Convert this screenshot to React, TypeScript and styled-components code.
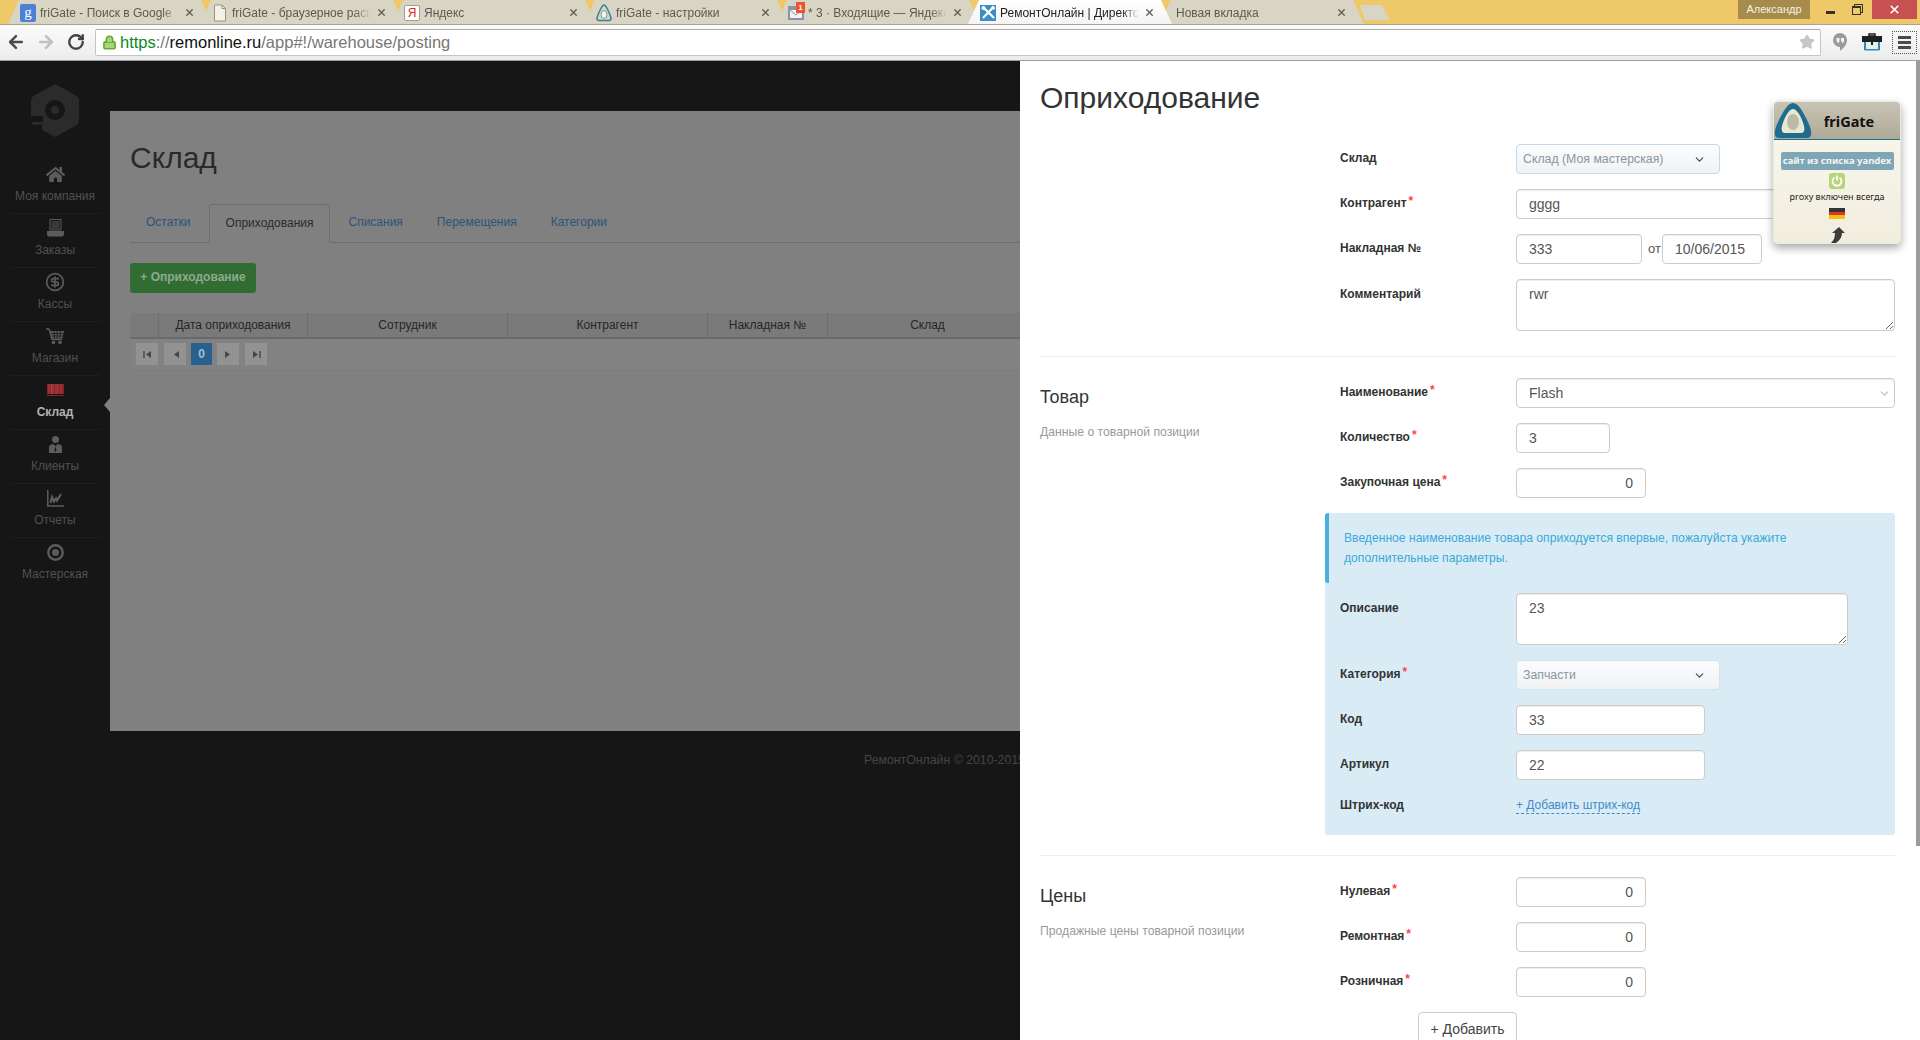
import styled, { createGlobalStyle } from "styled-components";
import { ArrowLeft, ArrowRight, ChevronDown, CircleDollarSign, Lock, RotateCw, Star, X } from "lucide-react";
import { FaHome } from "react-icons/fa";

const GlobalStyle = createGlobalStyle`
  * { box-sizing: border-box; }
  html, body { margin: 0; height: 1040px; overflow: hidden; background: #161616; }
  body { font-family: "Liberation Sans", Arial, sans-serif; font-size: 12px; color: #333; }
`;

const browserTabs = [
  { title: "friGate - Поиск в Google", icon: "google" },
  { title: "friGate - браузерное расширение", icon: "file" },
  { title: "Яндекс", icon: "yandex" },
  { title: "friGate - настройки", icon: "frigate" },
  { title: "* 3 · Входящие — Яндекс.Почта", icon: "mail" },
  { title: "РемонтОнлайн | Директор", icon: "remonline", active: true },
  { title: "Новая вкладка", icon: "" },
];

function TabIcon({ icon }: { icon: string }) {
  switch (icon) {
    case "google":
      return <GoogleIcon>g</GoogleIcon>;
    case "file":
      return (
        <svg width="16" height="18" viewBox="0 0 16 18">
          <path d="M2.5 1h7.5l3.5 3.5v12.5h-11z" fill="#f4f1e6" stroke="#9a937c" />
          <path d="M10 1v3.5h3.5" fill="none" stroke="#9a937c" />
        </svg>
      );
    case "yandex":
      return <YandexIcon>Я</YandexIcon>;
    case "frigate":
      return (
        <svg width="16" height="18" viewBox="0 0 16 18">
          <path d="M8 1c2 0 6 9 7 13 .3 1.5-.5 2.5-2 2.5H3c-1.500 0-2.300-1-2-2.500C2 10 6 1 8 1z" fill="#cfd8cc" stroke="#3f7f8f" strokeWidth="1.500" />
          <ellipse cx="8" cy="10.500" rx="3" ry="4" fill="#f4f2e4" stroke="#7a9a96" />
        </svg>
      );
    case "mail":
      return (
        <MailIcon>
          <svg width="16" height="16" viewBox="0 0 16 16">
            <rect x="0" y="1" width="16" height="14" fill="#8c93a8" />
            <path d="M2 5h12v8H2z" fill="#f2f2ee" />
            <path d="M2 5l6 5 6-5" fill="none" stroke="#8c93a8" />
          </svg>
          <MailBadge>1</MailBadge>
        </MailIcon>
      );
    case "remonline":
      return (
        <svg width="16" height="16" viewBox="0 0 16 16">
          <rect width="16" height="16" fill="#3b8fc4" />
          <path d="M3 2l11 11M13 2.500L3 13" stroke="#fff" strokeWidth="2.200" />
          <circle cx="3.500" cy="3" r="2" fill="#fff" />
          <path d="M12 1.500l2.500 2.500" stroke="#fff" strokeWidth="2.500" />
        </svg>
      );
    default:
      return <EmptyIcon />;
  }
}

const navItems = [
  { label: "Моя компания", icon: <FaHome size={19} /> },
  {
    label: "Заказы",
    icon: (
      <svg width="17" height="18" viewBox="0 0 17 18">
        <path d="M3 .5h11v10.500H3z" fill="none" stroke="currentColor" />
        <path d="M4.500 3h8M4.500 5h8M4.500 7h8M4.500 9h8" stroke="currentColor" />
        <path d="M0 12h17v3c0 1.500-.8 2.500-2 2.500H2c-1.200 0-2-1-2-2.500z" fill="currentColor" />
      </svg>
    ),
  },
  { label: "Кассы", icon: <CircleDollarSign size={20} strokeWidth={2} /> },
  {
    label: "Магазин",
    icon: (
      <svg width="18" height="17" viewBox="0 0 18 17">
        <path d="M0 1h3l3 10.500h10" fill="none" stroke="currentColor" strokeWidth="1.400" />
        <path d="M4 3h14l-1.500 7.500H6z" fill="currentColor" />
        <path d="M8 3l.6 7.500M11.200 3v7.500M14.500 3l-.6 7.500M5 5.500h12.500M5.500 8h11.500" stroke="#161616" strokeWidth=".8" />
        <circle cx="7.500" cy="14.500" r="1.800" fill="currentColor" />
        <circle cx="14" cy="14.500" r="1.800" fill="currentColor" />
      </svg>
    ),
  },
  {
    label: "Склад",
    active: true,
    icon: (
      <svg width="17" height="12" viewBox="0 0 17 12">
        <rect width="17" height="10" fill="#8c2226" />
        <path d="M2 0v10M4.500 0v10M6 0v10M9 0v10M11 0v10M14 0v10" stroke="#b5555a" strokeWidth=".7" />
        <path d="M0 11.500h17" stroke="#8c2226" />
      </svg>
    ),
  },
  {
    label: "Клиенты",
    icon: (
      <svg width="15" height="17" viewBox="0 0 15 17">
        <circle cx="7.500" cy="3.500" r="3.500" fill="currentColor" />
        <path d="M1 17V11c0-1.500 1-2.300 4-3l2.500 2L10 8c3 .7 4 1.500 4 3v6z" fill="currentColor" />
        <path d="M7.500 10.500L6.500 14l1 2 1-2z" fill="#161616" />
      </svg>
    ),
  },
  {
    label: "Отчеты",
    icon: (
      <svg width="17" height="17" viewBox="0 0 17 17">
        <path d="M.8 0v16h16.200" fill="none" stroke="currentColor" strokeWidth="1.500" />
        <path d="M3.500 13l1.500-6 2 4.500 2-3 1 2L14 4" fill="none" stroke="currentColor" strokeWidth="2.200" />
      </svg>
    ),
  },
  {
    label: "Мастерская",
    icon: (
      <svg width="17" height="17" viewBox="0 0 17 17">
        <circle cx="8.500" cy="8.500" r="7.200" fill="none" stroke="currentColor" strokeWidth="2.400" />
        <circle cx="8.500" cy="8.500" r="3.500" fill="currentColor" />
      </svg>
    ),
  },
];

const warehouseTabs = ["Остатки", "Оприходования", "Списания", "Перемещения", "Категории"];
const tableHead = ["", "Дата оприходования", "Сотрудник", "Контрагент", "Накладная №", "Склад", ""];

const PageTriangle = ({ flip, bar }: { flip?: boolean; bar?: boolean }) => (
  <svg width="9" height="9" viewBox="0 0 9 9">
    <g transform={flip ? "translate(9 0) scale(-1 1)" : undefined}>
      {bar && <path d="M1 1v7" stroke="#474747" strokeWidth="1.400" />}
      <path d="M8 1v7L3 4.500z" fill="#474747" />
    </g>
  </svg>
);

export default function App() {
  return (
    <>
      <GlobalStyle />
      <Browser>
        <TabStrip>
          <Tabs>
            {browserTabs.map((tab) => (
              <BrowserTab key={tab.title} $active={tab.active}>
                <TabIcon icon={tab.icon} />
                <TabTitle $active={tab.active}>{tab.title}</TabTitle>
                <TabClose><X size={11} strokeWidth={3} /></TabClose>
              </BrowserTab>
            ))}
            <NewTab />
          </Tabs>
          <ProfileBadge>Александр</ProfileBadge>
          <WindowButton>
            <MinimizeGlyph />
          </WindowButton>
          <WindowButton>
            <RestoreGlyph />
          </WindowButton>
          <CloseButton><X size={13} strokeWidth={3} /></CloseButton>
        </TabStrip>

        <Toolbar>
          <ToolButton><ArrowLeft size={20} strokeWidth={3} color="#4d4d4d" /></ToolButton>
          <ToolButton><ArrowRight size={20} strokeWidth={3} color="#c0c0c0" /></ToolButton>
          <ToolButton><RotateCw size={18} strokeWidth={3.200} color="#444" /></ToolButton>
          <Omnibox>
            <Lock size={15} strokeWidth={2.500} color="#6aa53c" fill="#a6d675" />
            <UrlText>
              <UrlScheme>https</UrlScheme>://<UrlHost>remonline.ru</UrlHost>/app#!/warehouse/posting
            </UrlText>
            <Star size={16} color="#c6c6c6" fill="#c6c6c6" />
          </Omnibox>
          <ExtensionButtons>
            <ExtensionButton>
              <svg width="16" height="20" viewBox="0 0 16 20">
                <path d="M8 1a7 7 0 0 1 7 7c0 4-3 8-7 11v-4a7 7 0 0 1 0-14z" fill="#9a9a9a" />
                <path d="M4.500 6h3v3c0 1.200-.8 2-2 2.200V9.500H4.500zM9 6h3v3c0 1.200-.8 2-2 2.200V9.500H9z" fill="#f2f2f2" />
              </svg>
            </ExtensionButton>
            <ExtensionButton>
              <svg width="20" height="18" viewBox="0 0 20 18">
                <path d="M2 8h16v8c0 1-.6 1.500-1.500 1.500h-13C2.600 17.500 2 17 2 16z" fill="#2f8db5" />
                <path d="M4 9h12v7H4z" fill="#e8eef0" />
                <path d="M0 3h20v6H0z" fill="#1f1f1f" />
                <path d="M7 1h6v2H7z" fill="none" stroke="#1f1f1f" strokeWidth="1.500" />
                <path d="M9 5h2v7H9z" fill="#1f1f1f" />
              </svg>
            </ExtensionButton>
            <MenuButton>
              <MenuBar />
              <MenuBar />
              <MenuBar />
            </MenuButton>
          </ExtensionButtons>
        </Toolbar>

        <Page>
          <Sidebar>
            <Logo>
              <svg width="48" height="53" viewBox="0 0 48 53">
                <path
                  d="M24 0l20 11c2.500 1.400 4 3 4 6v19c0 3-1.500 4.600-4 6L24 53 2 41c-1.300-.8-2-2-2-3.500V17c0-3 1.500-4.600 4-6z"
                  fill="#2b2b2b"
                />
                <circle cx="24" cy="26" r="10" fill="#161616" />
                <circle cx="24" cy="26" r="4" fill="#2b2b2b" />
                <path d="M0 32h12v6H0z" fill="#161616" />
                <path d="M0 42l11-2v7z" fill="#161616" />
              </svg>
            </Logo>
            {navItems.map((item) => (
              <NavItem key={item.label} $active={item.active}>
                <NavIcon>{item.icon}</NavIcon>
                <NavLabel $active={item.active}>{item.label}</NavLabel>
              </NavItem>
            ))}
          </Sidebar>

          <Main>
            <Content>
              <PageTitle>Склад</PageTitle>
              <PageTabs>
                {warehouseTabs.map((tab) => (
                  <PageTab key={tab} $active={tab === "Оприходования"}>{tab}</PageTab>
                ))}
              </PageTabs>
              <GreenButton>+ Оприходование</GreenButton>
              <TableHead>
                {tableHead.map((cell, i) => (
                  <HeadCell key={i}>{cell}</HeadCell>
                ))}
              </TableHead>
              <Pager>
                <PagerButton><PageTriangle bar /></PagerButton>
                <PagerButton><PageTriangle /></PagerButton>
                <PagerCurrent>0</PagerCurrent>
                <PagerButton><PageTriangle flip /></PagerButton>
                <PagerButton><PageTriangle flip bar /></PagerButton>
              </Pager>
            </Content>
            <Copyright>РемонтОнлайн © 2010-2015</Copyright>
          </Main>

          <Drawer>
            <DrawerTitle>Оприходование</DrawerTitle>

            <Section $first>
              <SectionInfo />
              <div>
                <FormRow>
                  <Label>Склад</Label>
                  <SelectBox $tone="blue"><span>Склад (Моя мастерская)</span><ChevronDown size={13} /></SelectBox>
                </FormRow>
                <FormRow>
                  <Label $required>Контрагент</Label>
                  <ComboField><span>gggg</span><ChevronDown size={13} /></ComboField>
                </FormRow>
                <FormRow>
                  <Label>Накладная №</Label>
                  <TextInput $width={126} defaultValue="333" />
                  <DateSeparator>от</DateSeparator>
                  <TextInput $width={100} defaultValue="10/06/2015" />
                </FormRow>
                <FormRow>
                  <Label $top>Комментарий</Label>
                  <TextArea $width={379} defaultValue="rwr" />
                </FormRow>
              </div>
            </Section>

            <Section>
              <SectionInfo>
                <SectionTitle>Товар</SectionTitle>
                <SectionNote>Данные о товарной позиции</SectionNote>
              </SectionInfo>
              <div>
                <FormRow>
                  <Label $required>Наименование</Label>
                  <ComboField><span>Flash</span><ChevronDown size={13} /></ComboField>
                </FormRow>
                <FormRow>
                  <Label $required>Количество</Label>
                  <TextInput $width={94} defaultValue="3" />
                </FormRow>
                <FormRow>
                  <Label $required>Закупочная цена</Label>
                  <TextInput $width={130} $right defaultValue="0" />
                </FormRow>
                <InfoPanel>
                  <InfoAlert>
                    Введенное наименование товара оприходуется впервые, пожалуйста укажите дополнительные параметры.
                  </InfoAlert>
                  <InfoFields>
                    <FormRow>
                      <Label $top>Описание</Label>
                      <TextArea $width={332} defaultValue="23" />
                    </FormRow>
                    <FormRow>
                      <Label $required>Категория</Label>
                      <SelectBox><span>Запчасти</span><ChevronDown size={13} /></SelectBox>
                    </FormRow>
                    <FormRow>
                      <Label>Код</Label>
                      <TextInput $width={189} defaultValue="33" />
                    </FormRow>
                    <FormRow>
                      <Label>Артикул</Label>
                      <TextInput $width={189} defaultValue="22" />
                    </FormRow>
                    <LinkRow>
                      <Label>Штрих-код</Label>
                      <DashedLink>+ Добавить штрих-код</DashedLink>
                    </LinkRow>
                  </InfoFields>
                </InfoPanel>
              </div>
            </Section>

            <Section $last>
              <SectionInfo>
                <SectionTitle>Цены</SectionTitle>
                <SectionNote>Продажные цены товарной позиции</SectionNote>
              </SectionInfo>
              <div>
                <FormRow>
                  <Label $required>Нулевая</Label>
                  <TextInput $width={130} $right defaultValue="0" />
                </FormRow>
                <FormRow>
                  <Label $required>Ремонтная</Label>
                  <TextInput $width={130} $right defaultValue="0" />
                </FormRow>
                <FormRow>
                  <Label $required>Розничная</Label>
                  <TextInput $width={130} $right defaultValue="0" />
                </FormRow>
              </div>
            </Section>
            <DrawerFooter>
              <OutlineButton>+ Добавить</OutlineButton>
            </DrawerFooter>

            <ScrollThumb />

            <FriGatePopup>
              <PopupHeader>
                <svg width="38" height="37" viewBox="0 0 38 37">
                  <path d="M19 1c4 0 8 5 13 15 3 6 6 12 5 17-.4 2-2 3-4 3H5c-2 0-3.600-1-4-3-1-5 2-11 5-17C11 6 15 1 19 1z" fill="#1e6d8e" />
                  <path d="M19 7c3 0 6 4 9 11 2 5 3 8 2 11-.5 1.500-1.500 2-3 2H11c-1.500 0-2.500-.5-3-2-1-3 0-6 2-11 3-7 6-11 9-11z" fill="#e9e7d6" />
                  <ellipse cx="19" cy="20" rx="6" ry="8" fill="#bfbaa8" />
                </svg>
                <PopupName>friGate</PopupName>
              </PopupHeader>
              <PopupBody>
                <ListBadge>сайт из списка yandex</ListBadge>
                <PowerTile>
                  <svg width="12" height="12" viewBox="0 0 12 12">
                    <path d="M3.500 2.500a4.500 4.500 0 1 0 5 0M6 .5v5" fill="none" stroke="#fff" strokeWidth="1.800" />
                  </svg>
                </PowerTile>
                <ProxyNote>proxy включен всегда</ProxyNote>
                <FlagDe />
                <svg width="16" height="16" viewBox="0 0 16 16">
                  <path d="M10 0l6 6h-3c0 4-2 7-6 10H2c3-3 4-6 4-10H3z" fill="#3d3d3d" />
                </svg>
              </PopupBody>
            </FriGatePopup>
          </Drawer>
        </Page>
      </Browser>
    </>
  );
}

const Browser = styled.div`
  width: 1920px;
  height: 1040px;
  display: flex;
  flex-direction: column;
  overflow: hidden;
`;

const TabStrip = styled.div`
  height: 25px;
  flex-shrink: 0;
  display: flex;
  align-items: flex-start;
  background: #efc869;
  border-bottom: 1px solid #a8a395;
`;

const Tabs = styled.div`
  flex: 1;
  display: flex;
  height: 24px;
  padding-left: 8px;
`;

const BrowserTab = styled.div<{ $active?: boolean }>`
  position: relative;
  z-index: ${(p) => (p.$active ? 1 : 0)};
  width: 204px;
  height: 24px;
  margin-right: -12px;
  padding: 1px 16px 0 12px;
  display: flex;
  align-items: center;
  gap: 4px;
  clip-path: polygon(0 100%, 11px 0, 193px 0, 204px 100%);
  background: ${(p) => (p.$active ? "linear-gradient(#fff, #f4f4f4)" : "#d9d5c5")};
`;

const GoogleIcon = styled.span`
  width: 16px;
  height: 18px;
  flex-shrink: 0;
  display: flex;
  align-items: center;
  justify-content: center;
  border-radius: 2px;
  background: #4d80d6;
  color: #fff;
  font: 15px/15px "Liberation Serif", serif;
`;

const YandexIcon = styled.span`
  width: 16px;
  height: 16px;
  flex-shrink: 0;
  display: flex;
  align-items: center;
  justify-content: center;
  border: 1px solid #a39d8a;
  border-radius: 2px;
  background: #fff;
  color: #e02a20;
  font-size: 12px;
`;

const MailIcon = styled.span`
  position: relative;
  width: 16px;
  height: 16px;
  flex-shrink: 0;
`;

const MailBadge = styled.span`
  position: absolute;
  top: -3px;
  right: -1px;
  width: 9px;
  height: 11px;
  background: #f0522d;
  color: #fff;
  font-size: 8px;
  font-weight: bold;
  line-height: 11px;
  text-align: center;
`;

const EmptyIcon = styled.span`
  width: 0;
`;

const TabTitle = styled.span<{ $active?: boolean }>`
  flex: 1;
  min-width: 0;
  overflow: hidden;
  white-space: nowrap;
  font-size: 12px;
  color: ${(p) => (p.$active ? "#222" : "#5c5a50")};
  -webkit-mask-image: linear-gradient(to right, #000 88%, transparent 100%);
  mask-image: linear-gradient(to right, #000 88%, transparent 100%);
`;

const TabClose = styled.span`
  width: 13px;
  flex-shrink: 0;
  display: flex;
  justify-content: center;
  color: #5d5d5d;
`;

const NewTab = styled.div`
  width: 30px;
  height: 15px;
  margin: 5px 0 0 8px;
  background: #d9d5c5;
  clip-path: polygon(0 0, 22px 0, 100% 100%, 5px 100%);
`;

const ProfileBadge = styled.div`
  width: 72px;
  height: 19px;
  margin-right: 7px;
  background: #a68b4d;
  color: #f5f1e4;
  font-size: 11px;
  line-height: 19px;
  text-align: center;
`;

const WindowButton = styled.div`
  width: 26px;
  height: 19px;
  display: flex;
  align-items: center;
  justify-content: center;
`;

const MinimizeGlyph = styled.span`
  width: 9px;
  height: 3px;
  margin-top: 5px;
  background: #33312a;
`;

const RestoreGlyph = styled.span`
  width: 9px;
  height: 9px;
  margin-top: 1px;
  border: 1px solid #33312a;
  border-top-width: 2px;
  box-shadow: 2px -2px 0 -1px #efc869, 2px -2px 0 0 #33312a;
`;

const CloseButton = styled.div`
  width: 45px;
  height: 19px;
  margin: 0 3px 0 3px;
  display: flex;
  align-items: center;
  justify-content: center;
  background: #c75050;
  color: #fff;
`;

const Toolbar = styled.div`
  height: 36px;
  flex-shrink: 0;
  display: flex;
  align-items: center;
  padding: 0 0 1px 1px;
  background: linear-gradient(#fbfbfb, #ececec);
  border-bottom: 1px solid #a0a0a0;
`;

const ToolButton = styled.div`
  width: 30px;
  display: flex;
  justify-content: center;
`;

const Omnibox = styled.div`
  flex: 1;
  height: 27px;
  margin-left: 4px;
  padding: 0 5px 0 6px;
  display: flex;
  align-items: center;
  gap: 3px;
  background: #fff;
  border: 1px solid #c4c4c4;
  border-top-color: #aaa;
  border-radius: 2px;
`;

const UrlText = styled.span`
  flex: 1;
  font-size: 16.500px;
  color: #777;
`;

const UrlScheme = styled.span`
  color: #0b8a23;
`;

const UrlHost = styled.span`
  color: #111;
`;

const ExtensionButtons = styled.div`
  display: flex;
  align-items: center;
  margin-left: 3px;
`;

const ExtensionButton = styled.div`
  width: 32px;
  display: flex;
  justify-content: center;
`;

const MenuButton = styled.div`
  width: 25px;
  height: 23px;
  margin: 0 3px 0 4px;
  display: flex;
  flex-direction: column;
  align-items: center;
  justify-content: center;
  gap: 2px;
  border: 1px dotted #555;
`;

const MenuBar = styled.span`
  width: 13px;
  height: 3px;
  background: #4a4a4a;
`;

const Page = styled.div`
  flex: 1;
  min-height: 0;
  display: flex;
`;

const Sidebar = styled.nav`
  flex: 0 0 110px;
  padding: 23px 10px 0;
  background: #161616;
`;

const Logo = styled.div`
  height: 53px;
  margin-bottom: 23px;
  display: flex;
  justify-content: center;
`;

const NavItem = styled.div<{ $active?: boolean }>`
  position: relative;
  height: 54px;
  padding-top: 4px;
  display: flex;
  flex-direction: column;
  align-items: center;
  border-bottom: 1px solid #1f1f1f;

  &:last-child {
    border-bottom: none;
  }

  ${(p) =>
    p.$active &&
    `
    &::after {
      content: "";
      position: absolute;
      top: 22px;
      right: -10px;
      border-style: solid;
      border-width: 7px 6px 7px 0;
      border-color: transparent #808080 transparent transparent;
    }
  `}
`;

const NavIcon = styled.div`
  height: 20px;
  display: flex;
  align-items: center;
  justify-content: center;
  color: #5c5c5c;
`;

const NavLabel = styled.div<{ $active?: boolean }>`
  margin-top: 4px;
  font-size: 12px;
  line-height: 17px;
  white-space: nowrap;
  font-weight: ${(p) => (p.$active ? "bold" : "normal")};
  color: ${(p) => (p.$active ? "#b4b4b4" : "#515151")};
`;

const Main = styled.main`
  flex: 0 0 910px;
  padding-top: 50px;
  overflow: hidden;
  background: #161616;
`;

const Content = styled.section`
  height: 620px;
  padding: 27px 0 0 20px;
  background: #808080;
`;

const PageTitle = styled.h1`
  margin: 0 0 26px;
  font-size: 30px;
  font-weight: normal;
  line-height: 40px;
  color: #2a2a2a;
`;

const PageTabs = styled.div`
  height: 39px;
  display: flex;
  gap: 2px;
  border-bottom: 1px solid #6d6d6d;
`;

const PageTab = styled.div<{ $active?: boolean }>`
  height: 39px;
  padding: 0 16px;
  font-size: 12px;
  line-height: 36px;
  color: ${(p) => (p.$active ? "#2c2c2c" : "#2f5378")};
  ${(p) =>
    p.$active &&
    `
    border: 1px solid #6d6d6d;
    border-bottom-color: #808080;
    border-radius: 4px 4px 0 0;
  `}
`;

const GreenButton = styled.div`
  width: 126px;
  height: 30px;
  margin: 20px 0;
  background: #316d33;
  border-radius: 3px;
  color: #8eaa8e;
  font-size: 12px;
  font-weight: bold;
  line-height: 29px;
  text-align: center;
`;

const TableHead = styled.div`
  display: grid;
  grid-template-columns: 29px 149px 200px 200px 120px 200px 1fr;
  height: 26px;
  background: #7a7a7a;
  border-bottom: 2px solid #6a6a6a;
`;

const HeadCell = styled.div`
  border-right: 1px solid #6e6e6e;
  color: #262626;
  font-size: 12px;
  line-height: 25px;
  text-align: center;
`;

const Pager = styled.div`
  height: 32px;
  padding: 4px 6px;
  display: flex;
  gap: 6px;
  background: #828282;
  border-bottom: 1px solid #7d7d7d;
`;

const PagerButton = styled.div`
  width: 22px;
  height: 22px;
  display: flex;
  align-items: center;
  justify-content: center;
  background: #929292;
`;

const PagerCurrent = styled.div`
  width: 21px;
  height: 22px;
  margin: 0 -1px;
  background: #29608f;
  color: #a5bccf;
  font-weight: bold;
  line-height: 22px;
  text-align: center;
`;

const Copyright = styled.div`
  margin: 21px 0 0 754px;
  color: #454545;
  font-size: 12.300px;
  line-height: 17px;
  white-space: nowrap;
`;

const Drawer = styled.aside`
  position: relative;
  flex: 0 0 900px;
  padding: 17px 25px 0 20px;
  overflow: hidden;
  background: #fff;
`;

const DrawerTitle = styled.h2`
  margin: 0 0 26px;
  font-size: 30px;
  font-weight: normal;
  line-height: 40px;
  color: #333;
`;

const Section = styled.div<{ $first?: boolean; $last?: boolean }>`
  display: grid;
  grid-template-columns: 285px 1fr;
  padding: ${(p) => (p.$first ? "0 0 10px" : p.$last ? "21px 0 0" : "21px 0 20px")};
  border-bottom: ${(p) => (p.$last ? "none" : "1px solid #eee")};
`;

const SectionInfo = styled.div``;

const SectionTitle = styled.h3`
  margin: 0 0 8px;
  font-size: 18px;
  font-weight: normal;
  line-height: 38px;
  color: #333;
`;

const SectionNote = styled.div`
  font-size: 12.200px;
  line-height: 17px;
  color: #999;
`;

const FormRow = styled.div`
  display: flex;
  align-items: flex-start;
  margin-bottom: 15px;
  padding-left: 15px;
`;

const LinkRow = styled(FormRow)`
  align-items: center;
  height: 20px;
  margin-bottom: 0;
`;

const Label = styled.label<{ $required?: boolean; $top?: boolean }>`
  flex: 0 0 176px;
  padding-top: ${(p) => (p.$top ? "7px" : "6px")};
  font-size: 12px;
  font-weight: bold;
  line-height: 17px;
  color: #333;

  ${LinkRow} & {
    padding-top: 0;
  }

  ${(p) =>
    p.$required &&
    `
    &::after {
      content: "*";
      position: relative;
      top: -2px;
      margin-left: 2px;
      color: #f44;
    }
  `}
`;

const inputBase = `
  height: 30px;
  padding: 0 12px;
  background: #fff;
  border: 1px solid #ccc;
  border-radius: 4px;
  box-shadow: inset 0 1px 1px rgba(0, 0, 0, 0.075);
  font-family: "Liberation Sans", Arial, sans-serif;
  font-size: 14px;
  color: #555;
`;

const TextInput = styled.input<{ $width: number; $right?: boolean }>`
  ${inputBase}
  width: ${(p) => p.$width}px;
  text-align: ${(p) => (p.$right ? "right" : "left")};
`;

const TextArea = styled.textarea<{ $width: number }>`
  ${inputBase}
  display: block;
  width: ${(p) => p.$width}px;
  height: 52px;
  padding: 6px 12px;
`;

const ComboField = styled.div`
  ${inputBase}
  flex: 1;
  display: flex;
  align-items: center;
  justify-content: space-between;
  padding-right: 3px;

  svg {
    color: #bbb;
  }
`;

const SelectBox = styled.div<{ $tone?: "blue" }>`
  width: 204px;
  height: 30px;
  padding: 0 13px 0 6px;
  display: flex;
  align-items: center;
  justify-content: space-between;
  background: linear-gradient(#fafcfd, #f0f2f4);
  border: 1px solid ${(p) => (p.$tone === "blue" ? "#c6d8e8" : "#d3e3ee")};
  border-radius: 4px;
  font-size: 12.300px;
  color: #8b95a0;

  svg {
    color: #444;
  }
`;

const DateSeparator = styled.span`
  width: 20px;
  padding-left: 6px;
  font-size: 13px;
  line-height: 30px;
  color: #555;
`;

const InfoPanel = styled.div`
  background: #d9ecf6;
  border-radius: 3px;
`;

const InfoAlert = styled.div`
  height: 70px;
  padding: 15px 50px 0 15px;
  border-left: 4px solid #48b0dc;
  border-radius: 3px 0 0 3px;
  color: #3ba9d9;
  font-size: 12.130px;
  line-height: 20px;
`;

const InfoFields = styled.div`
  padding: 10px 0 20px;
`;

const DashedLink = styled.span`
  border-bottom: 1px dashed #428bca;
  color: #428bca;
  font-size: 12px;
  line-height: 16px;
`;

const DrawerFooter = styled.div`
  text-align: center;
  margin-top: 0;
`;

const OutlineButton = styled.div`
  display: inline-block;
  width: 99px;
  height: 34px;
  border: 1px solid #ccc;
  border-radius: 4px;
  color: #444;
  font-size: 14px;
  line-height: 32px;
`;

const ScrollThumb = styled.div`
  position: absolute;
  top: 0;
  right: 0;
  width: 4px;
  height: 785px;
  background: #9c9c9c;
`;

const FriGatePopup = styled.div`
  position: absolute;
  top: 40px;
  right: 19px;
  width: 128px;
  height: 143px;
  overflow: hidden;
  border-radius: 5px;
  border: 1px solid #eceae0;
  box-shadow: 0 4px 8px rgba(0, 0, 0, 0.35);
  background: linear-gradient(rgba(250, 248, 238, 0.94), rgba(240, 237, 222, 0.97));
  font-family: "Noto Sans", "Liberation Sans", sans-serif;
`;

const PopupHeader = styled.div`
  height: 38px;
  display: flex;
  align-items: flex-end;
  background: linear-gradient(#c8c4b5, #afaa97);
  border-bottom: 1px solid #1e6d8e;
`;

const PopupName = styled.div`
  flex: 1;
  align-self: center;
  padding-right: 14px;
  color: #111;
  font-size: 14.500px;
  font-weight: bold;
  text-align: center;
`;

const PopupBody = styled.div`
  display: flex;
  flex-direction: column;
  align-items: center;
  padding-top: 12px;
`;

const ListBadge = styled.div`
  width: 113px;
  height: 18px;
  background: #7fa6b6;
  border-radius: 2px;
  color: #f5f5f0;
  font-size: 9.500px;
  font-weight: bold;
  line-height: 18px;
  text-align: center;
  white-space: nowrap;
`;

const PowerTile = styled.div`
  width: 16px;
  height: 16px;
  margin-top: 3px;
  display: flex;
  align-items: center;
  justify-content: center;
  background: #b7d67c;
  border-radius: 3px;
`;

const ProxyNote = styled.div`
  margin-top: 1px;
  color: #222;
  font-size: 9px;
  line-height: 13px;
  white-space: nowrap;
`;

const FlagDe = styled.div`
  width: 16px;
  height: 11px;
  margin: 5px 0 8px;
  background: linear-gradient(#333 0 33%, #d33 33% 66%, #f5c400 66%);
`;
